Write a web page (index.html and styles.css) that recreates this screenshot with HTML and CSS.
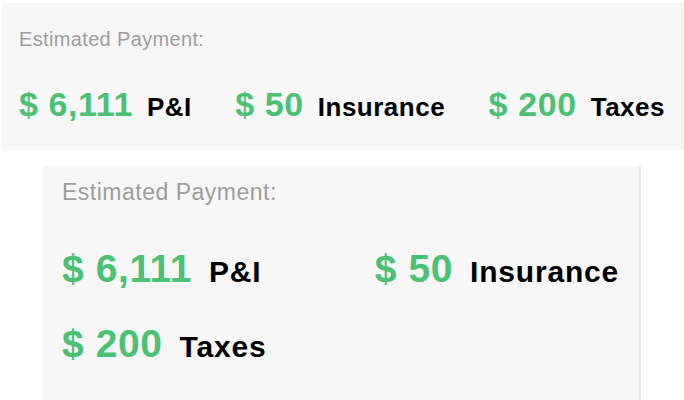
FILE: index.html
```html
<!DOCTYPE html>
<html lang="en">
<head>
    <meta charset="UTF-8">
    <meta name="viewport" content="width=device-width, initial-scale=1.0">
    <title>Estimated Payment</title>
    <link rel="stylesheet" href="styles.css">
</head>
<body>
    <!-- wide layout: all three on one line -->
    <div class="payment payment-wide">
        <div class="payment-title">Estimated Payment:</div>
        <div class="payment-items">
            <div class="item"><span class="amount">$ 6,111</span><span class="kind">P&amp;I</span></div>
            <div class="item"><span class="amount">$ 50</span><span class="kind">Insurance</span></div>
            <div class="item"><span class="amount">$ 200</span><span class="kind">Taxes</span></div>
        </div>
    </div>

    <!-- narrow layout: items wrap -->
    <div class="payment payment-narrow">
        <div class="payment-title">Estimated Payment:</div>
        <div class="payment-items">
            <div class="item"><span class="amount">$ 6,111</span><span class="kind">P&amp;I</span></div>
            <div class="item"><span class="amount">$ 50</span><span class="kind">Insurance</span></div>
            <div class="item"><span class="amount">$ 200</span><span class="kind">Taxes</span></div>
        </div>
    </div>
</body>
</html>
```

FILE: styles.css
```css
body {
    margin: 0;
    background: #fff;
    font-family: "Liberation Sans", Arial, sans-serif;
    overflow: hidden;
}
.payment {
    background: #f7f7f7;
}
.payment-title {
    color: #9d9d9d;
}
.payment-items {
    display: flex;
    flex-wrap: wrap;
    justify-content: space-between;
}
.item {
    display: flex;
    align-items: baseline;
}
.amount {
    color: #4cc073;
    font-weight: bold;
}
.kind {
    color: #000;
    font-weight: bold;
}

/* wide version */
.payment-wide {
    margin: 3px 1px 0 2px;
    padding: 24px 17px 23px 17px;
    border-right: 1px solid #ececec;
}
.payment-wide .payment-title {
    font-size: 20px;
    line-height: 24px;
    letter-spacing: 0.35px;
}
.payment-wide .payment-items {
    margin-top: 33px;
}
.payment-wide .amount {
    font-size: 34px;
    line-height: 40px;
    letter-spacing: 0.6px;
}
.payment-wide .kind {
    font-size: 26px;
    line-height: 40px;
    letter-spacing: 0.5px;
    margin-left: 14px;
}

/* narrow version */
.payment-narrow {
    width: 557px;
    margin: 16px 0 0 43px;
    padding: 12px 20px 60px 19px;
    border-right: 2px solid #e9e9e9;
}
.payment-narrow .payment-title {
    font-size: 23px;
    line-height: 28px;
    letter-spacing: 0.5px;
}
.payment-narrow .payment-items {
    margin-top: 40px;
    row-gap: 26px;
}
.payment-narrow .amount {
    font-size: 39px;
    line-height: 46px;
    letter-spacing: 0.6px;
}
.payment-narrow .kind {
    font-size: 30px;
    line-height: 46px;
    letter-spacing: 0.8px;
    margin-left: 17px;
}
```
